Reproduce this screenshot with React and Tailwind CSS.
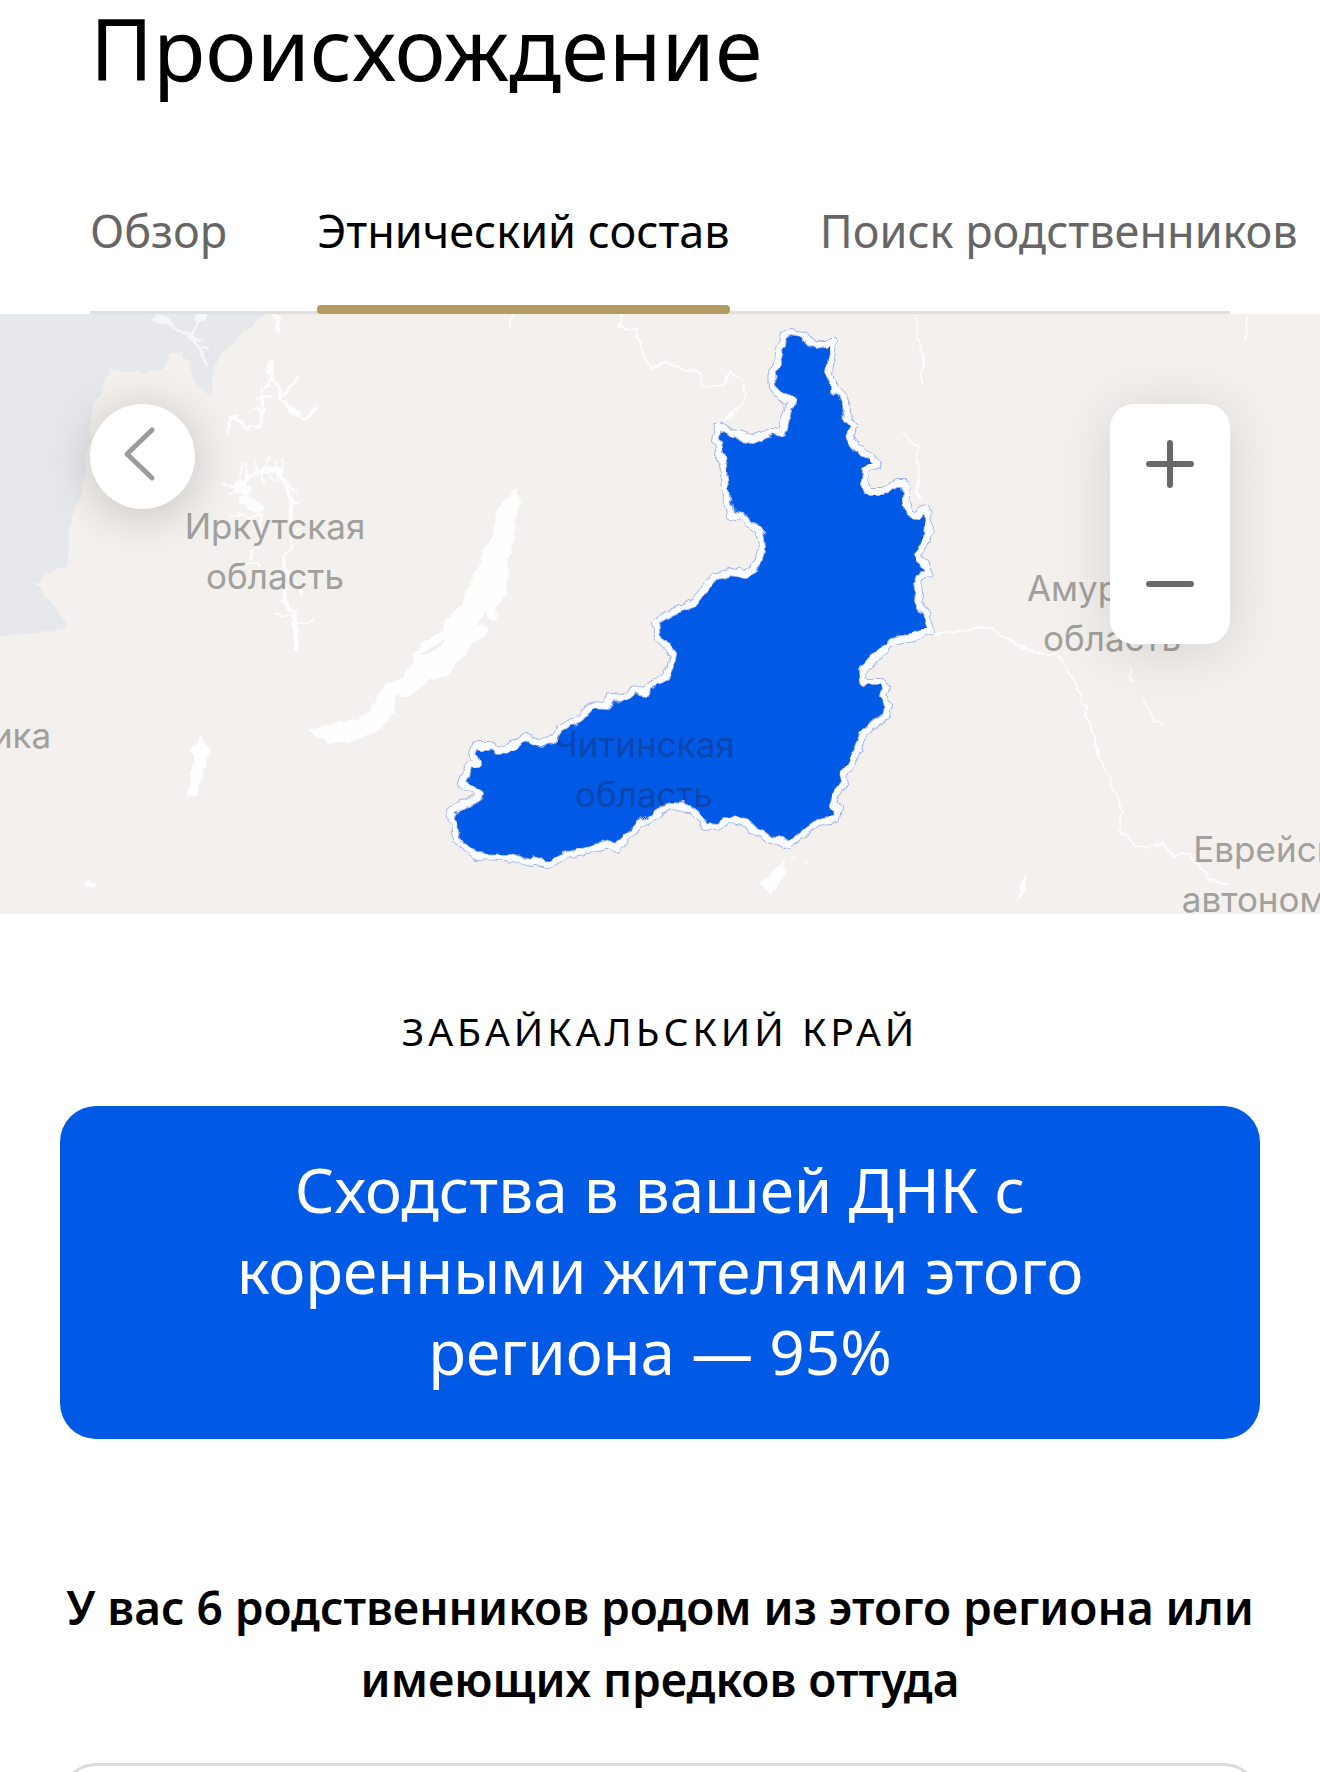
import { useState } from "react";

const tabs = [
  { id: "overview", label: "Обзор" },
  { id: "ethnicity", label: "Этнический состав" },
  { id: "relatives", label: "Поиск родственников" },
];

const mapLabels = [
  { lines: ["Иркутская", "область"], x: 275, y: 225 },
  { lines: ["Амурская", "область"], x: 1112, y: 287 },
  { lines: ["Республика"], x: -50, y: 434 },
  { lines: ["Еврейская", "автономная"], x: 1284, y: 548 },
];

const REGION_PATH =
  "M784 20 L790 18 803 20 810 28 817 32 822 29 833 29 831 43 829 59 833 68 833 75 841 79 846 89 848 106 855 113 850 121 855 131 862 139 871 141 877 151 865 156 864 166 869 178 882 178 897 169 905 169 906 183 909 198 915 201 927 195 929 209 928 226 918 238 919 246 925 251 929 260 919 263 917 270 919 279 918 289 926 298 930 318 912 323 892 327 881 339 863 356 864 368 881 368 887 372 883 381 888 393 886 402 864 419 857 436 845 459 844 468 835 483 833 490 839 494 837 505 818 508 806 518 789 531 780 527 768 524 756 518 747 509 733 505 718 513 706 512 694 498 685 493 670 492 658 499 640 511 628 521 623 529 615 533 608 531 592 536 568 541 547 551 535 546 530 549 504 543 475 542 465 533 456 526 454 509 449 504 453 496 460 491 479 484 480 479 461 469 465 461 469 451 477 449 472 439 475 432 491 432 497 437 511 433 525 423 541 429 553 426 559 414 578 406 592 391 606 392 611 383 623 384 633 376 646 378 654 369 666 363 671 351 673 339 658 323 656 308 671 299 693 289 702 278 715 263 730 258 745 260 757 251 762 236 761 223 755 214 743 203 730 201 727 183 724 156 720 139 718 129 715 127 718 111 733 120 753 125 773 117 783 119 787 99 792 86 780 83 773 73 772 58 778 49 777 36 783 31 Z";

const MapLabel = ({ lines, x, y, className }) => (
  <text x={x} y={y} textAnchor="middle" className={className}>
    {lines.map((line, index) => (
      <tspan key={line} x={x} dy={index === 0 ? 0 : 50}>
        {line}
      </tspan>
    ))}
  </text>
);

const RegionMap = () => (
  <svg
    viewBox="0 0 1320 600"
    preserveAspectRatio="xMidYMid slice"
    className="block w-full h-full bg-[#f3f0ed] font-['Inter',sans-serif] text-[35px]"
    role="img"
    aria-label="Карта: Забайкальский край"
  >
    <defs>
      <filter id="coast" x="-5%" y="-5%" width="110%" height="110%" colorInterpolationFilters="sRGB">
        <feTurbulence type="fractalNoise" baseFrequency="0.09" numOctaves="2" seed="4" />
        <feDisplacementMap in="SourceGraphic" scale="8" xChannelSelector="R" yChannelSelector="G" />
      </filter>
    </defs>

    {/* Neighbouring territory */}
    <path
      fill="#e6e8ec"
      filter="url(#coast)"
      d="M-20 -20 H267 L263 1 248 14 233 28 222 39 213 58 212 84 197 74 192 58 182 38 170 38 167 53 143 59 110 54 105 66 93 96 92 106 85 156 80 183 70 206 67 253 50 258 35 269 47 286 68 309 57 316 20 321 -20 321 Z"
    />

    {/* Rivers */}
    <g fill="none" stroke="#fdfdfb" strokeLinejoin="round" strokeLinecap="round" filter="url(#coast)">
      <path
        stroke="#f3f7fc"
        strokeWidth="3"
        d="M153 3 167 8 182 19 193 23 200 36 207 51 M200 0 192 21 M158 9 170 8 M194 4 206 6 M193 23 204 26 M200 36 207 34"
      />
      <path stroke="#f3f7fc" strokeWidth="7" d="M157 4 165 7 M197 3 205 3" />
      <path strokeWidth="4" d="M273 -2 277 6 279 18" />
      <path
        strokeWidth="3"
        d="M272 46 272 64 262 76 263 96 260 113 247 113 230 103 227 118 M272 64 278 74 283 86 293 96 303 106 318 94 M283 83 297 64 M256 84 270 82 M230 103 238 104 M255 96 263 96"
      />
      <path strokeWidth="7" d="M272 48 270 57 M291 96 297 99" />
      <path strokeWidth="10" d="M245 186 252 191 258 194 M240 172 246 176" />
      <path
        strokeWidth="5"
        d="M236 178 243 173 248 163 263 156 281 156 287 176 293 189 291 205"
      />
      <path
        strokeWidth="2"
        d="M291 205 290 219 293 233 283 243 290 269 M223 168 238 174 M240 163 241 149 M248 161 246 150 M257 156 256 147 M266 155 268 142 M274 157 276 146 M282 157 285 144 M287 172 297 176 M262 159 264 169 M270 160 273 168 M279 159 278 168 M236 178 230 180 M293 190 299 188 M240 199 250 203 262 200 257 232 250 246 M276 300 292 303 M229 205 242 200 M246 250 260 251 M296 309 306 310 313 303 M292 219 300 215 M293 270 305 281"
      />
      <path strokeWidth="4" d="M284 272 285 286 295 303 296 318 297 335" />
      <path
        strokeWidth="2"
        d="M622 -4 620 12 636 17 638 28 645 45 653 54 672 49 683 56 700 59 703 73 723 71 730 58 745 69 743 89 723 108 M917 1 919 26 923 43 922 68 M903 119 917 133 918 183 M514 1 509 12"
      />
      <path
        strokeWidth="2"
        d="M934 319 960 318 980 313 995 317 1010 326 1030 338 1057 341 1068 356 1077 373 1085 393 1085 401 1093 416 1098 439 1102 453 1110 463 1115 478 1122 496 1120 516 1132 529 1147 534 1162 529 1173 542 1190 541 1200 554 1213 568 1227 569 M1130 354 1133 368 M1143 386 1155 406 1163 409 M1247 4 1245 24"
      />
    </g>

    {/* Lakes */}
    <g fill="#fefefd" filter="url(#coast)">
      <path d="M517 174 521 188 515 206 513 228 508 246 507 278 498 293 495 308 488 306 485 296 477 311 487 314 486 324 473 328 464 343 447 359 427 368 412 381 397 383 395 396 383 414 350 429 330 429 308 416 323 412 340 408 357 407 370 396 383 373 402 364 415 344 413 343 422 329 440 318 447 305 462 289 466 276 477 256 486 232 493 223 496 198 510 181 Z" />
      <path d="M201 421 209 434 203 459 197 481 186 485 192 459 194 446 190 436 Z" />
      <path d="M83 568 90 566 96 571 84 571 Z" />
      <path d="M783 546 788 556 778 569 771 583 761 569 771 559 Z" />
      <path d="M1029 554 1026 578 1018 586 1020 573 Z" />
      <path d="M788 549 794 541 796 543 Z M804 544 812 550 804 548 Z" />
    </g>
    <path fill="#f0f0ef" d="M418 341 428 336 446 324 441 332 430 339 Z" />

    {/* Highlighted region, its label lies between the fill and the outline */}
    <path d={REGION_PATH} fill="#005ae6" filter="url(#coast)" />
    <MapLabel
      lines={["Читинская", "область"]}
      x={644}
      y={443}
      className="fill-[#0a45b0]"
    />
    <g fill="none" strokeLinejoin="round" filter="url(#coast)">
      <path d={REGION_PATH} stroke="#a9b5e6" strokeWidth="8" />
      <path d={REGION_PATH} stroke="#fafdff" strokeWidth="6" />
    </g>

    {mapLabels.map((label) => (
      <MapLabel key={label.lines[0]} {...label} className="fill-[#a1a09d]" />
    ))}
  </svg>
);

const App = () => {
  const [activeTab, setActiveTab] = useState("ethnicity");

  return (
    <div className="min-h-screen flex flex-col overflow-hidden bg-white text-black font-['Noto_Sans','Open_Sans',sans-serif]">
      {/* Header */}
      <header className="px-[90px]">
        <h1 className="text-[86px] leading-[96px]">Происхождение</h1>

        <nav className="mt-[90px] h-[128px] flex gap-[90px] border-b-3 border-[#e0e0e0]">
          {tabs.map((tab) => (
            <button
              key={tab.id}
              type="button"
              onClick={() => setActiveTab(tab.id)}
              className={`relative shrink-0 h-[128px] pb-[38px] text-[45px] leading-[60px] whitespace-nowrap ${
                activeTab === tab.id ? "text-black" : "text-[#666666]"
              }`}
            >
              {tab.label}
              {activeTab === tab.id && (
                <span className="absolute inset-x-0 bottom-0 h-[9px] rounded-sm bg-[#b49b5f]" />
              )}
            </button>
          ))}
        </nav>
      </header>

      {/* Map */}
      <section className="relative h-[600px]">
        <RegionMap />

        <button
          type="button"
          aria-label="Назад"
          className="absolute left-[90px] top-[90px] size-[105px] rounded-full bg-white shadow-[0_6px_48px_rgba(0,0,0,0.2)]"
        >
          <svg viewBox="0 0 105 105" className="size-full" fill="none" stroke="#9b9b9b" strokeWidth="5" strokeLinecap="round" strokeLinejoin="round">
            <path d="M62 26 37 50 62 74" />
          </svg>
        </button>

        <div className="absolute right-[90px] top-[90px] w-[120px] flex flex-col rounded-3xl bg-white shadow-[0_6px_60px_rgba(0,0,0,0.13)]">
          <button type="button" aria-label="Приблизить" className="h-[120px]">
            <svg viewBox="0 0 120 120" className="size-full" stroke="#696969" strokeWidth="6" strokeLinecap="round">
              <path d="M39 60 H81 M60 39 V81" />
            </svg>
          </button>
          <button type="button" aria-label="Отдалить" className="h-[120px]">
            <svg viewBox="0 0 120 120" className="size-full" stroke="#696969" strokeWidth="6" strokeLinecap="round">
              <path d="M39 60 H81" />
            </svg>
          </button>
        </div>
      </section>

      {/* Region details */}
      <main className="flex-1 flex flex-col px-[60px] text-center">
        <h2 className="mt-[87px] text-[39px] leading-[60px] uppercase tracking-[4px]">
          Забайкальский край
        </h2>

        <div className="mt-[45px] px-[120px] pt-[43px] pb-[47px] rounded-[36px] bg-[#005ae6] text-white text-[62px] leading-[81px]">
          Сходства в вашей ДНК с коренными жителями этого региона — 95%
        </div>

        <p className="mt-[132px] text-[46px] leading-[72px] font-semibold">
          У вас 6 родственников родом из этого региона или имеющих предков оттуда
        </p>

        {/* Relatives list */}
        <div className="mt-[48px] flex-1 basis-0 min-h-0 overflow-hidden">
          <div className="h-full min-h-[90px] rounded-t-[36px] border-3 border-b-0 border-[#dcdcdc]" />
        </div>
      </main>
    </div>
  );
};

export default App;
